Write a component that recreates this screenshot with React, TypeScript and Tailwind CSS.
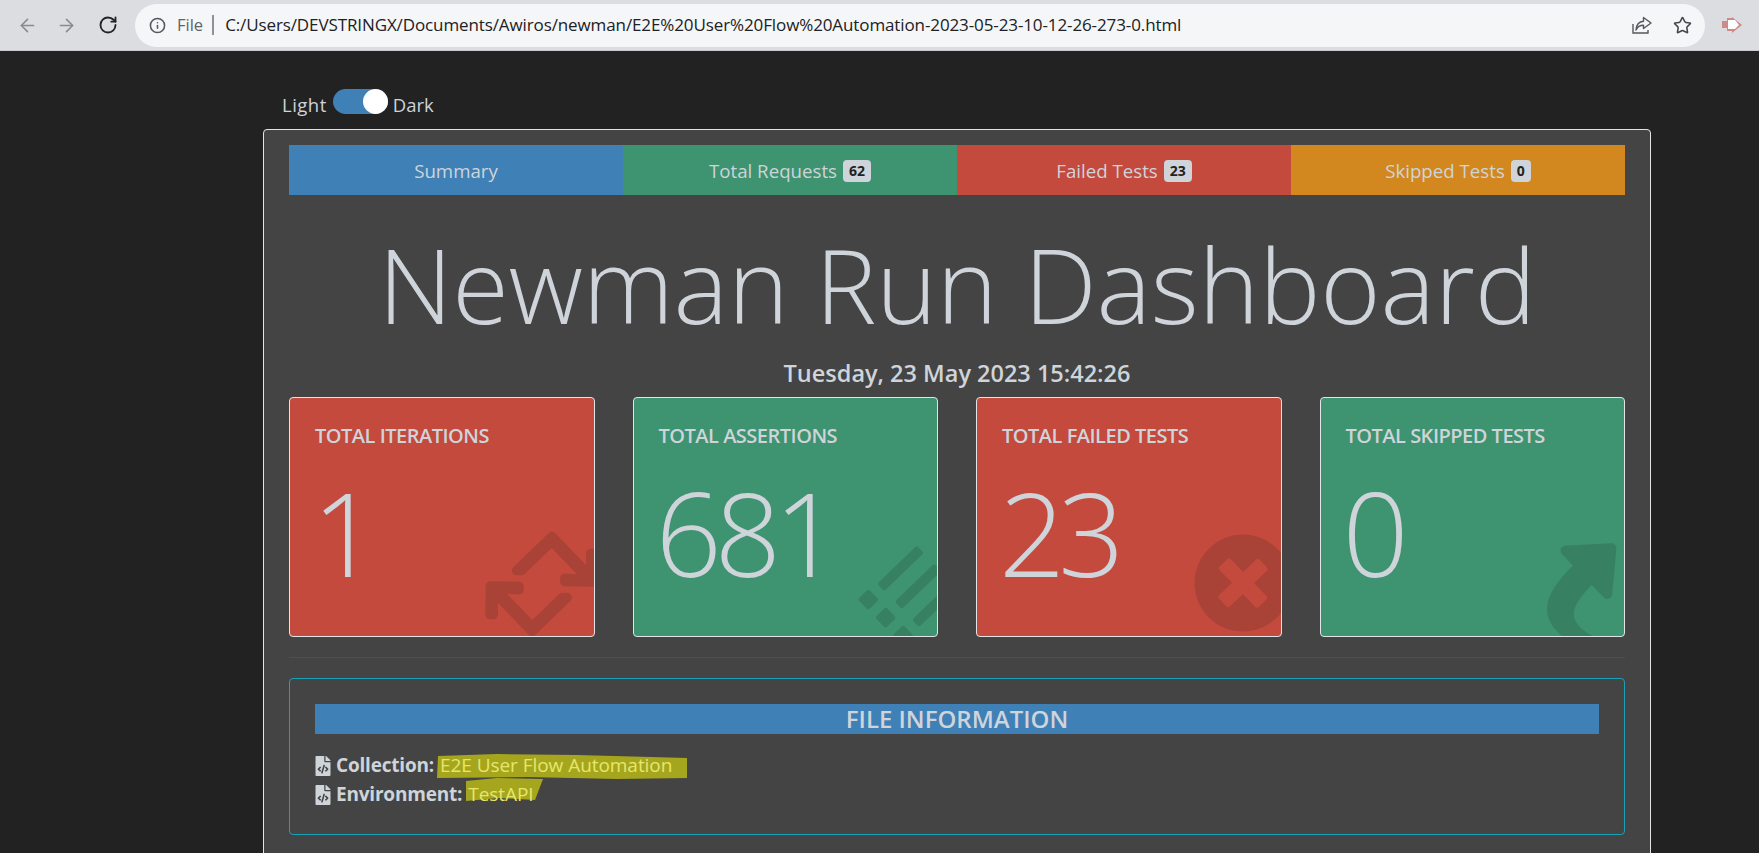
import { ArrowLeft, ArrowRight, Info, RotateCw, Star } from "lucide-react";
import { FaFileCode, FaList, FaPlusCircle, FaRetweet, FaShare } from "react-icons/fa";

const FONT = "font-['Open_Sans','Noto_Sans',sans-serif]";

const TABS = [
  { label: "Summary", bg: "bg-[#3f80b6]" },
  { label: "Total Requests", badge: "62", bg: "bg-[#3e9370]" },
  { label: "Failed Tests", badge: "23", bg: "bg-[#c44a3e]" },
  { label: "Skipped Tests", badge: "0", bg: "bg-[#d2881f]" },
];

function StatCard({
  title,
  value,
  bg,
  children,
}: {
  title: string;
  value: string;
  bg: string;
  children: React.ReactNode;
}) {
  return (
    <div className={`relative h-[240px] overflow-hidden rounded border border-[#e2e5e8] pl-[25px] ${bg}`}>
      <h6 className="mt-[26px] text-[20px] leading-[24px] font-semibold tracking-[-0.5px] text-[#ced4da]">{title}</h6>
      <p className="mt-[14px] -ml-[3px] text-[116px] leading-[140px] font-light tracking-[-7px] text-[#ced4da]">{value}</p>
      {children}
    </div>
  );
}

function FileRow({ label, value }: { label: string; value: string }) {
  return (
    <div className="flex h-[29px] items-center text-[19px] text-[#ced4da]">
      <FaFileCode className="mr-[5px] h-[20px] w-[16px] shrink-0" />
      <span className="font-bold tracking-[-0.2px]">{label}</span>
      <span className="relative ml-[6px] tracking-[-0.05px] text-[#e5e66b]">{value}</span>
    </div>
  );
}

export default function App() {
  return (
    <div className={`h-[853px] w-[1759px] overflow-hidden bg-[#222222] ${FONT}`}>
      {/* Browser bar */}
      <div className="flex h-[51px] items-center border-b border-[#c9cacd] bg-[#dcdde1]">
        <ArrowLeft className="ml-[17px] h-[21px] w-[21px] text-[#8a8b8e]" strokeWidth={1.8} />
        <ArrowRight className="ml-[18px] h-[21px] w-[21px] text-[#8a8b8e]" strokeWidth={1.8} />
        <RotateCw className="ml-[21px] h-[20px] w-[20px] text-[#222326]" strokeWidth={2.2} />
        <div className="ml-[17px] flex h-[43px] w-[1570px] items-center rounded-full bg-[#f5f6f8] pr-[13px]">
          <Info className="ml-[14px] h-[17px] w-[17px] text-[#55575a]" strokeWidth={2.2} />
          <span className="ml-[11px] text-[16.5px] text-[#5f6368]">File</span>
          <span className="ml-[9px] h-[20px] w-[2px] bg-[#8f9195]" />
          <span className="ml-[11px] text-[17px] tracking-[-0.11px] text-[#202124]">
            C:/Users/DEVSTRINGX/Documents/Awiros/newman/E2E%20User%20Flow%20Automation-2023-05-23-10-12-26-273-0.html
          </span>
          <svg viewBox="0 0 20 18" className="ml-auto h-[18px] w-[20px] text-[#55575a]" fill="none" stroke="currentColor" strokeWidth="1.4">
            <path d="M1 8v9h15v-3" />
            <path d="M11.5 1.5 19 7l-7.5 5.5V9.2C8 9.2 5.5 10.5 4 14c.3-5 3-8.4 7.5-8.8z" strokeLinejoin="round" />
          </svg>
          <Star className="ml-[21px] h-[19px] w-[19px] text-[#45474a]" strokeWidth={2} />
        </div>
        <svg viewBox="0 0 20 16" className="ml-[17px] h-[16px] w-[20px]">
          <path d="M0 4h5V1h5V0l10 8-10 8v-2H5v-3H0z" fill="#d08a85" />
          <path d="M6 3h7l4 5-4 4H6z" fill="#ffffff" />
        </svg>
      </div>

      {/* Theme switch */}
      <div className="mt-[38px] ml-[282px] flex h-[25px] items-center text-[18.5px] text-[#ced4da]">
        <span className="pt-[6px] tracking-[0.5px]">Light</span>
        <span className="mr-[5px] ml-[6px] flex h-[25px] w-[55px] justify-end rounded-full bg-[#3f80b6]">
          <span className="h-[25px] w-[25px] rounded-full bg-white" />
        </span>
        <span className="pt-[6px]">Dark</span>
      </div>

      <div className="mt-[15px] ml-[263px] h-[760px] w-[1388px] rounded border border-[#e2e5e8] bg-[#444444] px-[25px] pt-[15px]">
        <div className="grid h-[50px] grid-cols-4">
          {TABS.map((tab) => (
            <div key={tab.label} className={`flex items-center justify-center pt-[2px] text-[18.7px] text-[#ced4da] ${tab.bg}`}>
              {tab.label}
              {tab.badge && (
                <span className="ml-[6px] rounded-[4px] bg-[#ced4da] px-[6px] py-[1px] text-[14px] leading-[20px] font-bold text-[#222]">
                  {tab.badge}
                </span>
              )}
            </div>
          ))}
        </div>

        <h1 className="mt-[24px] text-center text-[103px] leading-[130px] font-light tracking-[-0.2px] text-[#ced4da]">Newman Run Dashboard</h1>
        <p className="mt-[8px] text-center text-[23.5px] leading-[32px] font-semibold text-[#ced4da]">Tuesday, 23 May 2023 15:42:26</p>

        <div className="mt-[8px] grid grid-cols-4 gap-[38px]">
          <StatCard title="TOTAL ITERATIONS" value="1" bg="bg-[#c44a3e]">
            <FaRetweet className="absolute right-[-12px] bottom-[-12px] h-[128px] w-[128px] -rotate-[44deg] text-[#14141426]" />
          </StatCard>
          <StatCard title="TOTAL ASSERTIONS" value="681" bg="bg-[#3e9370]">
            <FaList className="absolute right-[-12px] bottom-[1px] h-[80px] w-[80px] -rotate-[44deg] text-[#14141426]" />
          </StatCard>
          <StatCard title="TOTAL FAILED TESTS" value="23" bg="bg-[#c44a3e]">
            <FaPlusCircle className="absolute right-[-12px] bottom-[3px] h-[100px] w-[100px] -rotate-[44deg] text-[#14141426]" />
          </StatCard>
          <StatCard title="TOTAL SKIPPED TESTS" value="0" bg="bg-[#3e9370]">
            <FaShare className="absolute right-[-12px] bottom-[-2px] h-[102px] w-[102px] -rotate-[44deg] text-[#14141426]" />
          </StatCard>
        </div>

        <hr className="mt-[20px] border-t border-[#4e4e4e]" />

        <div className="relative mt-[20px] h-[157px] rounded border border-[#17a2b8] px-[25px] pt-[25px]">
          <h5 className="flex h-[30px] items-center justify-center bg-[#3f80b6] text-[24px] font-semibold text-[#ced4da]">FILE INFORMATION</h5>
          <div className="relative mt-[17px]">
            <svg viewBox="0 0 260 48" className="absolute top-[3px] left-[122px] h-[48px] w-[260px]">
              <path d="M1 2 60 0 140 1 250 4 250 24 180 25 90 23 0 24z" fill="#a5a61d" />
              <path d="M29 27 60 24 106 25 98 46 62 44 29 47z" fill="#a5a61d" />
            </svg>
            <div className="relative">
              <FileRow label="Collection:" value="E2E User Flow Automation" />
              <FileRow label="Environment:" value="TestAPI" />
            </div>
          </div>
        </div>
      </div>
    </div>
  );
}
